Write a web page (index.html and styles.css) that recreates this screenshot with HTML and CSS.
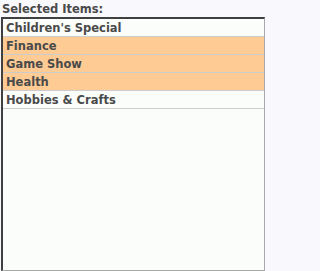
FILE: index.html
```html
<!DOCTYPE html>
<html>
<head>
<meta charset="utf-8">
<link rel="stylesheet" href="styles.css">
</head>
<body>
<div class="panel">
  <div class="label">Selected Items:</div>
  <div class="list">
    <div class="item">Children's Special</div>
    <div class="item sel">Finance</div>
    <div class="item sel">Game Show</div>
    <div class="item sel">Health</div>
    <div class="item">Hobbies &amp; Crafts</div>
  </div>
</div>
</body>
</html>
```
FILE: styles.css
```css
html, body {
  margin: 0;
  padding: 0;
  background: #f9f8fc;
}
.panel {
  width: 264px;
  padding: 1px 1px 0 1px;
  font-family: "DejaVu Sans", Verdana, sans-serif;
  font-weight: bold;
  font-size: 11.5px;
  color: #4a4a4a;
}
.label {
  height: 16px;
  line-height: 17px;
  padding-left: 1px;
}
.list {
  height: 251px;
  border-style: solid;
  border-width: 2px 1px 1px 2px;
  border-color: #404040 #a8a8a8 #a8a8a8 #404040;
  background: #fbfdfb;
}
.item {
  height: 17px;
  line-height: 18px;
  padding-left: 3px;
  border-bottom: 1px solid #cccccc;
}
.item.sel {
  background: #fecb94;
}
```
